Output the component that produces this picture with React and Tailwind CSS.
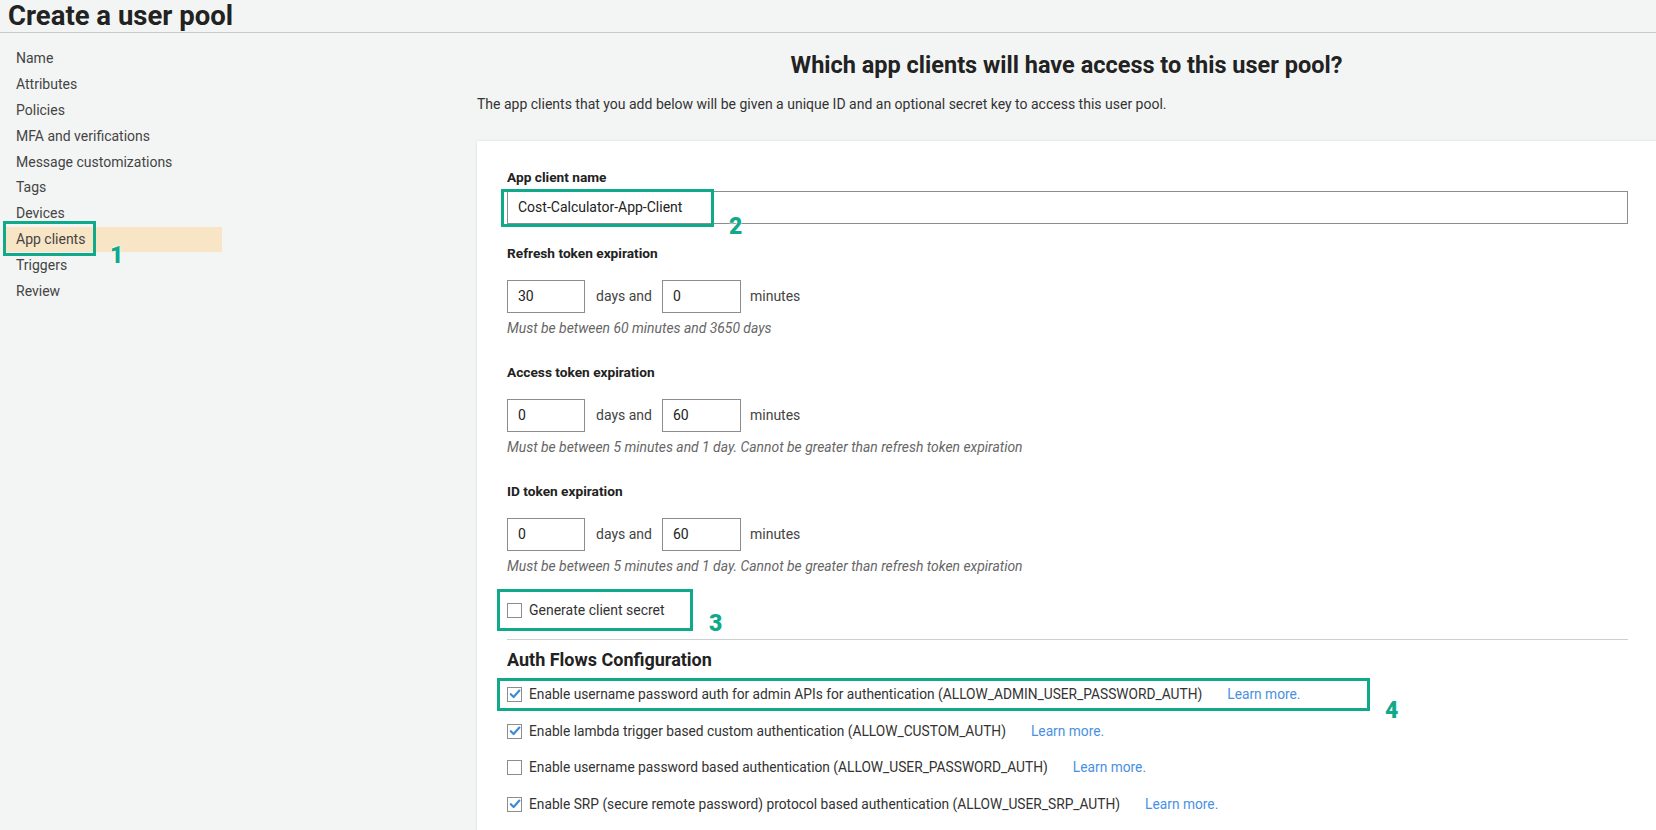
const navItems = [
  "Name",
  "Attributes",
  "Policies",
  "MFA and verifications",
  "Message customizations",
  "Tags",
  "Devices",
  "App clients",
  "Triggers",
  "Review",
];

const tokens = [
  {
    label: "Refresh token expiration",
    days: "30",
    minutes: "0",
    help: "Must be between 60 minutes and 3650 days",
  },
  {
    label: "Access token expiration",
    days: "0",
    minutes: "60",
    help: "Must be between 5 minutes and 1 day. Cannot be greater than refresh token expiration",
  },
  {
    label: "ID token expiration",
    days: "0",
    minutes: "60",
    help: "Must be between 5 minutes and 1 day. Cannot be greater than refresh token expiration",
  },
];

const flows = [
  {
    text: "Enable username password auth for admin APIs for authentication (ALLOW_ADMIN_USER_PASSWORD_AUTH)",
    checked: true,
    boxed: true,
  },
  {
    text: "Enable lambda trigger based custom authentication (ALLOW_CUSTOM_AUTH)",
    checked: true,
  },
  {
    text: "Enable username password based authentication (ALLOW_USER_PASSWORD_AUTH)",
    checked: false,
  },
  {
    text: "Enable SRP (secure remote password) protocol based authentication (ALLOW_USER_SRP_AUTH)",
    checked: true,
  },
];

// green annotation numbers drawn on top of the screenshot
function Marker({ n, className }) {
  return (
    <span
      className={
        "absolute text-[23px] leading-none font-black text-[#10a98a] [text-shadow:0_0_2px_#fff,0_0_2px_#fff] " +
        className
      }
    >
      {n}
    </span>
  );
}

function Checkbox({ checked }) {
  return (
    <span className="w-[15px] h-[15px] border border-[#8d8d8d] bg-white flex items-center justify-center shrink-0">
      {checked && (
        <svg width="12" height="12" viewBox="0 0 12 12">
          <path
            d="M1.8 6.2 L4.6 9 L10.4 2.6"
            fill="none"
            stroke="#3d8bd8"
            strokeWidth="2.2"
            strokeLinecap="round"
            strokeLinejoin="round"
          />
        </svg>
      )}
    </span>
  );
}

function TokenBlock({ token, first }) {
  return (
    <div className={first ? "mt-[20px]" : "mt-[26px]"}>
      <div className="text-[13.7px] leading-[18px] font-bold text-[#222]">
        {token.label}
      </div>
      <div className="flex items-center mt-[18px] h-[33px] text-[14px] text-[#444]">
        <div className="w-[78px] h-[33px] border border-[#8d8d8d] flex items-center pl-[10px] text-[#222]">
          {token.days}
        </div>
        <span className="ml-[11px] mr-[10px]">days and</span>
        <div className="w-[79px] h-[33px] border border-[#8d8d8d] flex items-center pl-[10px] text-[#222]">
          {token.minutes}
        </div>
        <span className="ml-[9px]">minutes</span>
      </div>
      <div className="mt-[6px] text-[13.9px] leading-[18px] italic text-[#666]">
        {token.help}
      </div>
    </div>
  );
}

export default function App() {
  return (
    <div className="w-[1656px] h-[830px] overflow-hidden bg-[#f3f5f4] font-['Roboto',sans-serif] text-[#333]">
      <div className="h-[33px] border-b border-[#c9cbca] pl-[8px]">
        <h1 className="text-[27.5px] leading-[32px] font-bold text-[#222]">
          Create a user pool
        </h1>
      </div>

      <div className="flex">
        <div className="w-[477px] shrink-0 pt-[13px] pl-[5px]">
          {navItems.map((item) => {
            const active = item === "App clients";
            return (
              <div
                key={item}
                className={
                  "relative w-[217px] h-[25.8px] flex items-center pl-[11px] text-[14px] text-[#444] " +
                  (active ? "bg-[#f8e5c6]" : "")
                }
              >
                {item}
                {active && (
                  <>
                    <span className="absolute left-[-2px] top-[-6px] w-[93px] h-[35px] border-[3px] border-[#10a98a]" />
                    <Marker n="1" className="left-[105px] top-[17px]" />
                  </>
                )}
              </div>
            );
          })}
        </div>

        <div className="flex-1">
          <h2 className="mt-[17px] text-center text-[23.5px] leading-[30px] font-bold text-[#222]">
            Which app clients will have access to this user pool?
          </h2>
          <p className="mt-[14px] text-[14px] leading-[20px] text-[#333]">
            The app clients that you add below will be given a unique ID and an optional secret key to access this user pool.
          </p>

          <div className="mt-[27px] bg-white shadow-[0_0_2px_rgba(0,0,0,0.12)] pl-[30px] pr-[28px] pt-[27px] pb-[40px]">
            <div className="text-[13.7px] leading-[18px] font-bold text-[#222]">
              App client name
            </div>
            <div className="relative mt-[5px] h-[33px] border border-[#8d8d8d] flex items-center pl-[10px] text-[14px] text-[#222]">
              Cost-Calculator-App-Client
              <span className="absolute left-[-7px] top-[-3px] w-[213px] h-[38px] border-[3px] border-[#10a98a]" />
              <Marker n="2" className="left-[221px] top-[23px]" />
            </div>

            {tokens.map((t, i) => (
              <TokenBlock key={t.label} token={t} first={i === 0} />
            ))}

            <div className="relative mt-[25px] h-[20px] flex items-center gap-[7px] text-[14px] text-[#333]">
              <Checkbox checked={false} />
              <span>Generate client secret</span>
              <span className="absolute left-[-10px] top-[-11px] w-[196px] h-[42px] border-[3px] border-[#10a98a]" />
              <Marker n="3" className="left-[202px] top-[12px]" />
            </div>

            <div className="mt-[19px] border-t border-[#cfcfcf]" />

            <h3 className="mt-[8px] text-[18px] leading-[24px] font-bold text-[#222]">
              Auth Flows Configuration
            </h3>

            <div className="mt-[4px]">
              {flows.map((f) => (
                <div
                  key={f.text}
                  className="relative h-[36.7px] flex items-center gap-[7px] text-[13.75px] text-[#333]"
                >
                  <Checkbox checked={f.checked} />
                  <span>{f.text}</span>
                  <span className="ml-[18px] text-[#4a90e2]">Learn more.</span>
                  {f.boxed && (
                    <>
                      <span className="absolute left-[-10px] top-[2px] w-[873px] h-[33px] border-[3px] border-[#10a98a]" />
                      <Marker n="4" className="left-[878px] top-[23px]" />
                    </>
                  )}
                </div>
              ))}
            </div>
          </div>
        </div>
      </div>
    </div>
  );
}
